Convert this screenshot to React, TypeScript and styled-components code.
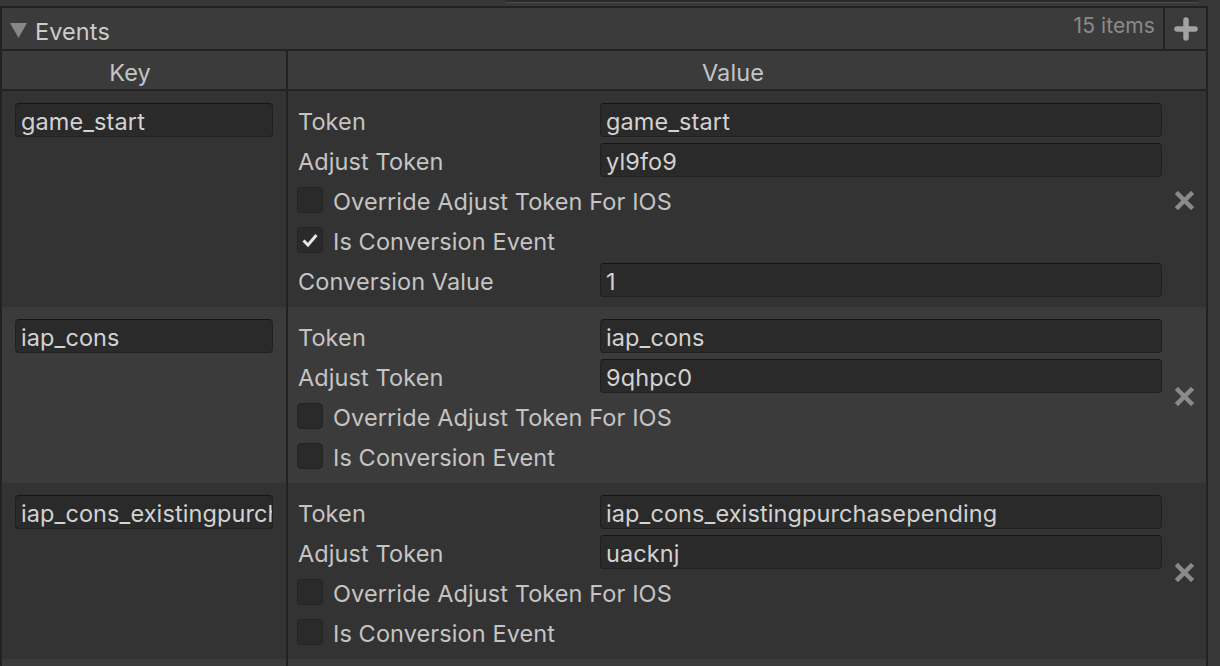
import { FC } from 'react';
import styled, { createGlobalStyle } from 'styled-components';

const LINE = '#222222';
const TEXT = '#c4c4c4';
const FIELD_TEXT = '#d2d2d2';

type TEntry =
  | { kind: 'field'; label: string; value: string }
  | { kind: 'toggle'; label: string; checked: boolean };

interface IEvent {
  key: string;
  entries: TEntry[];
}

const EVENTS: IEvent[] = [
  {
    key: 'game_start',
    entries: [
      { kind: 'field', label: 'Token', value: 'game_start' },
      { kind: 'field', label: 'Adjust Token', value: 'yl9fo9' },
      { kind: 'toggle', label: 'Override Adjust Token For IOS', checked: false },
      { kind: 'toggle', label: 'Is Conversion Event', checked: true },
      { kind: 'field', label: 'Conversion Value', value: '1' },
    ],
  },
  {
    key: 'iap_cons',
    entries: [
      { kind: 'field', label: 'Token', value: 'iap_cons' },
      { kind: 'field', label: 'Adjust Token', value: '9qhpc0' },
      { kind: 'toggle', label: 'Override Adjust Token For IOS', checked: false },
      { kind: 'toggle', label: 'Is Conversion Event', checked: false },
    ],
  },
  {
    key: 'iap_cons_existingpurchasepending',
    entries: [
      { kind: 'field', label: 'Token', value: 'iap_cons_existingpurchasepending' },
      { kind: 'field', label: 'Adjust Token', value: 'uacknj' },
      { kind: 'toggle', label: 'Override Adjust Token For IOS', checked: false },
      { kind: 'toggle', label: 'Is Conversion Event', checked: false },
    ],
  },
];

const GlobalStyle = createGlobalStyle`
  html, body {
    margin: 0;
    background: #383838;
    overflow: hidden;
  }
  body {
    font-family: Inter, "Noto Sans", sans-serif;
    font-size: 23.5px;
    letter-spacing: 0.1px;
    color: ${TEXT};
  }
`;

const SPage = styled.div`
  width: 1220px;
  height: 666px;
  overflow: hidden;
  background: #383838;
`;

const STopStrip = styled.div`
  height: 6px;
  padding-left: 505px;
  padding-right: 21px;
`;
const STopField = styled.div`
  height: 2px;
  background: #2a2a2a;
  border-bottom: 1px solid #4e4e4e;
  border-radius: 0 0 4px 4px;
`;

const SFrame = styled.div`
  width: 1208px;
  box-sizing: border-box;
  border: 2px solid ${LINE};
  border-bottom: none;
`;

const SListHeader = styled.div`
  display: flex;
  align-items: center;
  height: 41px;
  background: #3b3b3b;
  border-bottom: 2px solid ${LINE};
`;
const SFoldout = styled.div`
  flex: 1;
  display: flex;
  align-items: center;
  gap: 8px;
  padding: 5px 0 0 8px;
  color: #cccccc;
`;
const STriangleSlot = styled.div`
  display: flex;
  margin-top: -1px;
`;
const SCount = styled.div`
  padding-right: 8px;
  color: #8a8a8a;
  font-size: 21px;
  align-self: flex-start;
  margin-top: 5px;
`;
const SAddButton = styled.div`
  width: 41px;
  height: 100%;
  display: flex;
  align-items: center;
  justify-content: center;
  border-left: 2px solid ${LINE};
`;

const SColumns = styled.div`
  display: flex;
  height: 38px;
  background: #3b3b3b;
  border-bottom: 2px solid ${LINE};
`;
const SColHead = styled.div<{ $width?: number }>`
  ${({ $width }) => ($width ? `width: ${$width}px;` : 'flex: 1;')}
  display: flex;
  align-items: center;
  justify-content: center;
  padding: 4px 28px 0 0;
  box-sizing: border-box;
  & + & {
    border-left: 2px solid ${LINE};
  }
`;

const SRow = styled.div<{ $odd: boolean }>`
  display: flex;
  background: ${({ $odd }) => ($odd ? '#3b3b3b' : '#333333')};
`;
const SKeyCell = styled.div`
  width: 286px;
  box-sizing: border-box;
  padding: 12px 13px 11px 13px;
  border-right: 2px solid ${LINE};
`;
const SValueCell = styled.div`
  flex: 1;
  display: flex;
  align-items: center;
  padding: 9px 0 7px 10px;
`;
const SEntries = styled.div`
  flex: 1;
  display: flex;
  flex-direction: column;
`;
const SLine = styled.div`
  height: 40px;
  display: flex;
  align-items: center;
`;
const SLabel = styled.div`
  width: 302px;
  padding-top: 2px;
  box-sizing: border-box;
  white-space: nowrap;
`;
const SToggleLabel = styled.span`
  padding-top: 2px;
  white-space: nowrap;
`;
const SField = styled.div<{ $grow?: boolean }>`
  ${({ $grow }) => ($grow ? 'flex: 1;' : '')}
  height: 34px;
  box-sizing: border-box;
  display: flex;
  align-items: center;
  padding: 2px 5px 0;
  background: #2a2a2a;
  border: 1px solid #202020;
  border-top-color: #151515;
  border-radius: 4px;
  color: ${FIELD_TEXT};
  overflow: hidden;
  white-space: nowrap;
`;
const SCheckbox = styled.div`
  width: 26px;
  height: 26px;
  box-sizing: border-box;
  margin-left: -1px;
  margin-right: 10px;
  display: flex;
  align-items: center;
  justify-content: center;
  background: #2a2a2a;
  border: 1px solid #232323;
  border-radius: 4px;
`;
const SRemove = styled.div`
  width: 44px;
  display: flex;
  justify-content: center;
`;

const Triangle = () => (
  <svg width="17" height="15" viewBox="0 0 17 15">
    <polygon points="0,0 17,0 8.5,15" fill="#878787" />
  </svg>
);

const PlusIcon = () => (
  <svg width="24" height="24" viewBox="0 0 24 24">
    <path
      d="M12 3v18M3 12h18"
      stroke="#a3a3a3"
      strokeWidth="5.5"
      strokeLinecap="round"
    />
  </svg>
);

const CrossIcon = () => (
  <svg width="19" height="19" viewBox="0 0 19 19">
    <path
      d="M3 3l13 13M16 3L3 16"
      stroke="#8a8a8a"
      strokeWidth="4.5"
      strokeLinecap="square"
    />
  </svg>
);

const CheckMark = () => (
  <svg width="18" height="16" viewBox="0 0 18 16">
    <path
      d="M2.5 8.5l4.5 4.5L15.5 3"
      stroke="#e6e6e6"
      strokeWidth="3"
      fill="none"
    />
  </svg>
);

const Entry: FC<{ entry: TEntry }> = ({ entry }) =>
  entry.kind === 'field' ? (
    <SLine>
      <SLabel>{entry.label}</SLabel>
      <SField $grow>{entry.value}</SField>
    </SLine>
  ) : (
    <SLine>
      <SCheckbox>{entry.checked && <CheckMark />}</SCheckbox>
      <SToggleLabel>{entry.label}</SToggleLabel>
    </SLine>
  );

const EventRow: FC<{ event: IEvent; odd: boolean }> = ({ event, odd }) => (
  <SRow $odd={odd}>
    <SKeyCell>
      <SField>{event.key}</SField>
    </SKeyCell>
    <SValueCell>
      <SEntries>
        {event.entries.map((entry, i) => (
          <Entry key={i} entry={entry} />
        ))}
      </SEntries>
      <SRemove>
        <CrossIcon />
      </SRemove>
    </SValueCell>
  </SRow>
);

const App: FC = () => (
  <SPage>
    <GlobalStyle />
    <STopStrip>
      <STopField />
    </STopStrip>
    <SFrame>
      <SListHeader>
        <SFoldout>
          <STriangleSlot>
            <Triangle />
          </STriangleSlot>
          Events
        </SFoldout>
        <SCount>15 items</SCount>
        <SAddButton>
          <PlusIcon />
        </SAddButton>
      </SListHeader>
      <SColumns>
        <SColHead $width={284}>Key</SColHead>
        <SColHead>Value</SColHead>
      </SColumns>
      {EVENTS.map((event, i) => (
        <EventRow key={event.key} event={event} odd={i % 2 === 1} />
      ))}
      <SRow $odd>
        <SKeyCell />
        <SValueCell />
      </SRow>
    </SFrame>
  </SPage>
);

export default App;
